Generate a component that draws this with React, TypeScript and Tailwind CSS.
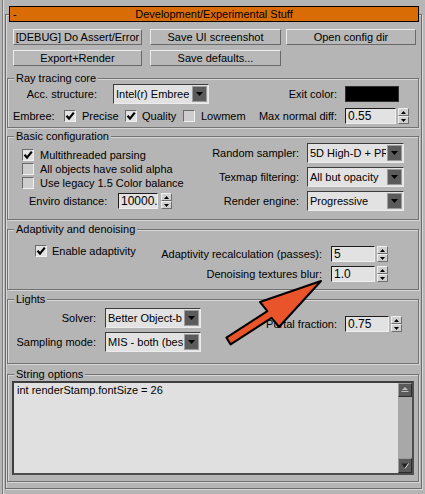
import React from "react";

const Check = ({ on }: { on?: boolean }) => (
  <span
    className={`flex h-[12px] w-[12px] shrink-0 items-center justify-center border border-t-[#6a6a6a] border-l-[#6a6a6a] border-b-[#f0f0f0] border-r-[#f0f0f0] ${
      on ? "bg-[#e2e2e2]" : "bg-[#cdcdcd]"
    }`}
  >
    {on && (
      <svg width="10" height="10" viewBox="0 0 10 10">
        <path d="M1.5 4.8 L4 7.6 L8.8 1.6" stroke="#000" strokeWidth="2.2" fill="none" />
      </svg>
    )}
  </span>
);

const Drop = ({ text, w }: { text: string; w: string }) => (
  <div
    className={`flex h-[20px] shrink-0 border border-t-[#3c3c3c] border-l-[#3c3c3c] border-b-[#ececec] border-r-[#ececec] bg-[#e2e2e2] ${w}`}
  >
    <span className="flex-1 overflow-hidden whitespace-nowrap pl-[2px] text-[11px] leading-[18px]">{text}</span>
    <span className="m-[1px] flex w-[15px] items-center justify-center border border-[#9c9c9c] bg-[#5b5b5b]">
      <svg width="7" height="4" viewBox="0 0 7 4">
        <path d="M0 0H7L3.5 4Z" fill="#000" />
      </svg>
    </span>
  </div>
);

const Arrows = () => (
  <div className="flex h-[16px] w-[11px] shrink-0 flex-col">
    <div className="flex h-[8px] items-center justify-center border border-[#f0f0f0] border-b-[#6e6e6e] border-r-[#6e6e6e] bg-[#d0d0d0]">
      <svg width="5" height="3" viewBox="0 0 5 3">
        <path d="M2.5 0L5 3H0Z" fill="#000" />
      </svg>
    </div>
    <div className="flex h-[8px] items-center justify-center border border-[#f0f0f0] border-b-[#6e6e6e] border-r-[#6e6e6e] bg-[#d0d0d0]">
      <svg width="5" height="3" viewBox="0 0 5 3">
        <path d="M0 0H5L2.5 3Z" fill="#000" />
      </svg>
    </div>
  </div>
);

const Spin = ({ value, w, gap }: { value: string; w: string; gap: string }) => (
  <div className="flex h-[16px] shrink-0">
    <div
      className={`border border-t-[#1e1e1e] border-l-[#1e1e1e] border-b-[#efefef] border-r-[#efefef] bg-[#e2e2e2] pl-[2px] text-[12px] leading-[14px] ${w}`}
    >
      {value}
    </div>
    <div className={gap}>
      <Arrows />
    </div>
  </div>
);

const Btn = ({ label, w, ml }: { label: string; w: string; ml: string }) => (
  <div
    className={`flex h-[16px] items-center justify-center border border-t-[#ececec] border-l-[#ececec] border-b-[#6a6a6a] border-r-[#6a6a6a] bg-[#b8b8b8] ${w} ${ml}`}
  >
    {label}
  </div>
);

const Group = ({ title, h, mt, children }: { title: string; h: string; mt: string; children: React.ReactNode }) => (
  <div
    className={`relative ml-[1px] w-[412px] border border-[#727272] shadow-[inset_1px_1px_0_#d6d6d6,1px_1px_0_#d6d6d6] ${h} ${mt}`}
  >
    <span className="absolute -top-[8px] left-[6px] bg-[#b5b5b5] px-[2px] leading-[14px]">{title}</span>
    {children}
  </div>
);

export default function App() {
  return (
    <div className="relative flex h-[494px] w-[425px] overflow-hidden bg-[#b5b5b5] pl-[2px] font-['Liberation_Sans',Arial,sans-serif] text-[11px] text-black">
      <div className="h-full w-[1px] bg-[#7a7a7a]" />
      <div className="h-full w-[1px] bg-[#dadada]" />

      {/* rollout */}
      <div className="ml-[1px] mt-[14px] flex h-[475px] w-[417px] flex-col border border-[#6c6c6c] shadow-[inset_1px_1px_0_#d8d8d8,1px_1px_0_#d8d8d8]">
        <div className="-mt-[9px] ml-[3px] flex h-[16px] w-[410px] items-center border border-black bg-[#da6c05] leading-[14px]">
          <span className="w-[14px] pl-[3px]">-</span>
          <span className="flex-1 text-center">Development/Experimental Stuff</span>
          <span className="w-[14px]" />
        </div>

        <div className="mt-[7px] flex">
          <Btn label="[DEBUG] Do Assert/Error" w="w-[129px]" ml="ml-[7px]" />
          <Btn label="Save UI screenshot" w="w-[131px]" ml="ml-[8px]" />
          <Btn label="Open config dir" w="w-[130px]" ml="ml-[5px]" />
        </div>
        <div className="mt-[5px] flex">
          <Btn label="Export+Render" w="w-[129px]" ml="ml-[7px]" />
          <Btn label="Save defaults..." w="w-[131px]" ml="ml-[8px]" />
        </div>

        <Group title="Ray tracing core" h="h-[50px]" mt="mt-[12px]">
          <div className="mt-[5px] flex h-[20px] items-center">
            <span className="w-[89px] text-right">Acc. structure:</span>
            <div className="ml-[16px]">
              <Drop text="Intel(r) Embree" w="w-[96px]" />
            </div>
            <span className="w-[128px] text-right">Exit color:</span>
            <div className="ml-[8px] h-[16px] w-[54px] border border-[#303030] bg-black" />
          </div>
          <div className="mt-[2px] flex h-[20px] items-center">
            <span className="w-[56px] pl-[5px]">Embree:</span>
            <Check on />
            <span className="ml-[6px] w-[43px]">Precise</span>
            <Check on />
            <span className="ml-[5px] w-[41px]">Quality</span>
            <Check />
            <span className="ml-[6px] w-[44px]">Lowmem</span>
            <span className="w-[92px] text-right">Max normal diff:</span>
            <div className="ml-[8px]">
              <Spin value="0.55" w="w-[51px]" gap="ml-[2px]" />
            </div>
          </div>
        </Group>

        <Group title="Basic configuration" h="h-[84px]" mt="mt-[8px]">
          <div className="flex">
            <div className="w-[192px] pt-[11px]">
              <div className="flex h-[14px] items-center">
                <span className="ml-[14px]">
                  <Check on />
                </span>
                <span className="ml-[6px]">Multithreaded parsing</span>
              </div>
              <div className="flex h-[14px] items-center">
                <span className="ml-[14px]">
                  <Check />
                </span>
                <span className="ml-[6px]">All objects have solid alpha</span>
              </div>
              <div className="flex h-[14px] items-center">
                <span className="ml-[14px]">
                  <Check />
                </span>
                <span className="ml-[6px]">Use legacy 1.5 Color balance</span>
              </div>
              <div className="mt-[3px] flex h-[16px] items-center">
                <span className="w-[110px] pl-[21px]">Enviro distance:</span>
                <Spin value="10000." w="w-[40px]" gap="ml-[3px]" />
              </div>
            </div>
            <div className="flex flex-col gap-[4px] pt-[6px]">
              <div className="flex h-[20px] items-center">
                <span className="w-[99px] text-right">Random sampler:</span>
                <div className="ml-[8px]">
                  <Drop text="5D High-D + PR" w="w-[97px]" />
                </div>
              </div>
              <div className="flex h-[20px] items-center">
                <span className="w-[99px] text-right">Texmap filtering:</span>
                <div className="ml-[8px]">
                  <Drop text="All but opacity" w="w-[97px]" />
                </div>
              </div>
              <div className="flex h-[20px] items-center">
                <span className="w-[99px] text-right">Render engine:</span>
                <div className="ml-[8px]">
                  <Drop text="Progressive" w="w-[97px]" />
                </div>
              </div>
            </div>
          </div>
        </Group>

        <Group title="Adaptivity and denoising" h="h-[61px]" mt="mt-[9px]">
          <div className="flex">
            <div className="w-[142px] pt-[15px]">
              <div className="flex h-[12px] items-center">
                <span className="ml-[27px]">
                  <Check on />
                </span>
                <span className="ml-[5px]">Enable adaptivity</span>
              </div>
            </div>
            <div className="flex flex-col gap-[4px] pt-[16px]">
              <div className="flex h-[16px] items-center">
                <span className="w-[172px] text-right">Adaptivity recalculation (passes):</span>
                <div className="ml-[9px]">
                  <Spin value="5" w="w-[44px]" gap="ml-[2px]" />
                </div>
              </div>
              <div className="flex h-[16px] items-center">
                <span className="w-[172px] text-right">Denoising textures blur:</span>
                <div className="ml-[9px]">
                  <Spin value="1.0" w="w-[44px]" gap="ml-[2px]" />
                </div>
              </div>
            </div>
          </div>
        </Group>

        <Group title="Lights" h="h-[65px]" mt="mt-[9px]">
          <div className="flex">
            <div className="flex w-[193px] flex-col gap-[4px] pt-[8px]">
              <div className="flex h-[20px] items-center">
                <span className="w-[89px] text-right">Solver:</span>
                <div className="ml-[9px]">
                  <Drop text="Better Object-b" w="w-[96px]" />
                </div>
              </div>
              <div className="flex h-[20px] items-center">
                <span className="w-[89px] text-right">Sampling mode:</span>
                <div className="ml-[9px]">
                  <Drop text="MIS - both (best" w="w-[96px]" />
                </div>
              </div>
            </div>
            <div className="pt-[16px]">
              <div className="flex h-[16px] items-center">
                <span className="w-[136px] text-right">Portal fraction:</span>
                <div className="ml-[8px]">
                  <Spin value="0.75" w="w-[44px]" gap="ml-[2px]" />
                </div>
              </div>
            </div>
          </div>
        </Group>

        <Group title="String options" h="h-[108px]" mt="mt-[10px]">
          <div className="ml-[4px] mt-[6px] flex h-[94px] w-[402px] border-2 border-[#3e3e3e] border-b-[#4e4e4e] border-r-[#4e4e4e] bg-[#e0e0e0]">
            <div className="flex-1 pl-[3px] leading-[14px]">int renderStamp.fontSize = 26</div>
            <div className="flex w-[14px] flex-col justify-between bg-[#a8a8a8]">
              <div className="flex h-[14px] items-center justify-center border border-t-[#9c9c9c] border-l-[#9c9c9c] border-b-[#2c2c2c] border-r-[#2c2c2c] bg-[#5a5a5a]">
                <svg width="8" height="6" viewBox="0 0 8 6">
                  <path d="M4 0L7 3H1Z" fill="#bdbdbd" />
                  <path d="M0.5 4.5H7.5" stroke="#bdbdbd" strokeWidth="1" />
                </svg>
              </div>
              <div className="flex h-[15px] items-center justify-center border border-t-[#9c9c9c] border-l-[#9c9c9c] border-b-[#2c2c2c] border-r-[#2c2c2c] bg-[#5a5a5a]">
                <svg width="8" height="6" viewBox="0 0 8 6">
                  <path d="M0.5 0.5H7.5L4 5.5Z" fill="#222" />
                  <path d="M7.5 0.5L4 5.5" stroke="#e8e8e8" strokeWidth="1" />
                </svg>
              </div>
            </div>
          </div>
        </Group>
      </div>

      {/* red annotation arrow */}
      <svg className="pointer-events-none absolute left-0 top-0" width="425" height="494" viewBox="0 0 425 494">
        <polygon
          points="321,281 260,302 267.4,311.1 226.4,337.6 230.6,344.4 271.6,317.9 279,327"
          fill="#e9542a"
          stroke="#000"
          strokeWidth="2"
          strokeLinejoin="round"
        />
      </svg>
    </div>
  );
}
